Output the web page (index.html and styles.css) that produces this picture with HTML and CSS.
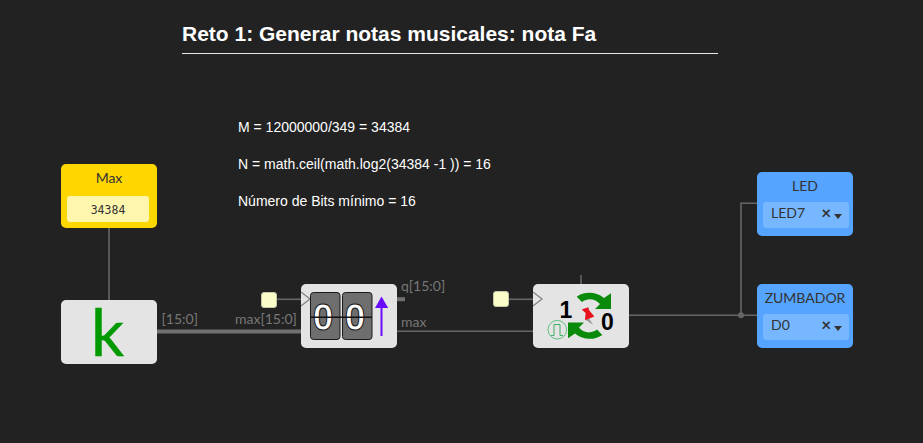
FILE: index.html
```html
<!DOCTYPE html>
<html lang="es">
<head>
    <meta charset="UTF-8">
    <title>Reto 1: nota Fa</title>
    <link rel="stylesheet" href="styles.css">
</head>
<body>
    <div class="canvas">
        <!-- wires go under the blocks -->
        <svg class="wires" width="923" height="443" viewBox="0 0 923 443">
            <g fill="none" stroke="#666" stroke-width="1.600">
                <path d="M109 228V300"/>
                <path d="M277 299.300H301"/>
                <path d="M397 331.300H533"/>
                <path d="M509 299.300H533"/>
                <path d="M581 275V284"/>
                <path d="M629 315.300H757"/>
                <path d="M741 315V203.300H757"/>
            </g>
            <g fill="none" stroke="#707070" stroke-width="4">
                <path d="M157 331.500H301"/>
                <path d="M397 299.200H405"/>
            </g>
            <circle cx="741" cy="315.300" r="3" fill="#666"/>
        </svg>

        <div class="sheet-note title">Reto 1: Generar notas musicales: nota Fa</div>
        <div class="sheet-note notes">
            <p>M = 12000000/349 = 34384</p>
            <p>N = math.ceil(math.log2(34384 -1 )) = 16</p>
            <p>Número de Bits mínimo = 16</p>
        </div>

        <div class="block block-const">
            <div class="block-name">Max</div>
            <div class="const-value">34384</div>
        </div>

        <div class="block block-gray block-k">k</div>

        <div class="block block-gray block-counter">
            <svg width="96" height="64" viewBox="0 0 96 64">
                <path class="clock-tick" d="M0 8L9 15L0 22"/>
                <g stroke="#1a1a1a" stroke-width="1" fill="#6e6e6e">
                    <rect x="9.500" y="8.500" width="29.500" height="47" rx="3"/>
                    <rect x="41.500" y="8.500" width="29.500" height="47" rx="3"/>
                </g>
                <text x="22" y="46" class="flip-digit">0</text>
                <text x="54" y="46" class="flip-digit">0</text>
                <path d="M9.500 33.300H71" stroke="#111" stroke-width="1.500"/>
                <path d="M80.500 23V52" stroke="#6a0dff" stroke-width="2"/>
                <path d="M74 24L80.500 12.500L87.200 24Z" fill="#6a0dff"/>
            </svg>
        </div>

        <div class="block block-gray block-pull">
            <svg width="96" height="64" viewBox="0 0 96 64">
                <path class="clock-tick" d="M0 8L9 15L0 22"/>
                <text x="26.500" y="34" class="pull-digit">1</text>
                <text x="68" y="46" class="pull-digit">0</text>
                <g fill="#0a8a0a">
                    <path d="M43.700 12.700C50 8 62 6.500 71 14L78 9.300V25H62L67 20C62 14 54 14 49 18Z"/>
                    <path d="M43.700 12.700C50 8 62 6.500 71 14L78 9.300V25H62L67 20C62 14 54 14 49 18Z" transform="rotate(180 56.500 31.800)"/>
                </g>
                <path d="M56 34L60 41L53 36Z" fill="#9a9a9a"/>
                <path d="M48.700 25.500L55.300 23.300L56 26L61.300 32.500L52 36.300L52.600 29Z" fill="#e8101c"/>
                <circle cx="24.300" cy="45.700" r="9.300" fill="none" stroke="#3cb96a" stroke-width="0.800"/>
                <path d="M18 51.500H21V40.500H27V51.500H30" fill="none" stroke="#2fa85a" stroke-width="0.900"/>
            </svg>
        </div>

        <div class="block block-pin block-led">
            <div class="block-name">LED</div>
            <div class="pin-select"><span>LED7</span><span class="pin-clear">×</span><span class="pin-caret"></span></div>
        </div>

        <div class="block block-pin block-buzzer">
            <div class="block-name">ZUMBADOR</div>
            <div class="pin-select"><span>D0</span><span class="pin-clear">×</span><span class="pin-caret"></span></div>
        </div>

        <div class="clock-input clock-a"></div>
        <div class="clock-input clock-b"></div>

        <span class="wire-label label-k">[15:0]</span>
        <span class="wire-label label-max-in">max[15:0]</span>
        <span class="wire-label label-q">q[15:0]</span>
        <span class="wire-label label-max">max</span>
    </div>
</body>
</html>
```

FILE: styles.css
```css
body {
    margin: 0;
    background-color: #222222;
    font-family: 'Lato', 'Liberation Sans', sans-serif;
    overflow: hidden;
}

.canvas {
    position: relative;
    width: 923px;
    height: 443px;
    overflow: hidden;
}

.wires {
    position: absolute;
    left: 0;
    top: 0;
}

.sheet-note {
    position: absolute;
    color: #ffffff;
    font-family: 'Liberation Sans', Arial, sans-serif;
}

.title {
    left: 182px;
    top: 21px;
    width: 536px;
    height: 32px;
    border-bottom: 1px solid #e8e8e8;
    font-size: 21px;
    font-weight: bold;
    line-height: 26px;
}

.notes {
    left: 238px;
    top: 109px;
    font-size: 14px;
    line-height: 37px;
}

.notes p {
    margin: 0;
}

.block {
    position: absolute;
    width: 96px;
    height: 64px;
    border-radius: 5px;
    box-sizing: border-box;
    color: #333333;
}

.block svg {
    display: block;
}

.block-gray {
    background-color: #e4e4e4;
}

.block-name {
    font-size: 14px;
    line-height: 17px;
    text-align: center;
    padding-top: 5px;
}

.block-const {
    left: 61px;
    top: 164px;
    background-color: #ffd700;
}

.const-value {
    margin: 10px 8px 0 6px;
    height: 26px;
    border-radius: 3px;
    background-color: #fff6ae;
    font-family: 'DejaVu Sans Mono', monospace;
    font-size: 11.5px;
    line-height: 28px;
    text-align: center;
}

.block-k {
    left: 61px;
    top: 300px;
    padding-right: 3px;
    color: #009900;
    font-size: 65px;
    line-height: 62px;
    text-align: center;
    -webkit-text-stroke: 0.5px #009900;
}

.block-counter {
    left: 301px;
    top: 284px;
}

.block-pull {
    left: 533px;
    top: 284px;
}

.clock-tick {
    fill: none;
    stroke: #808080;
    stroke-width: 1.2;
}

.flip-digit {
    font-family: 'Liberation Sans', sans-serif;
    font-size: 37px;
    font-weight: bold;
    text-anchor: middle;
    fill: #ffffff;
    stroke: #111111;
    stroke-width: 1;
}

.pull-digit {
    font-family: 'Liberation Sans', sans-serif;
    font-size: 23px;
    font-weight: bold;
    fill: #000000;
}

.block-pin {
    background-color: #55a4ff;
}

.block-led {
    left: 757px;
    top: 172px;
}

.block-buzzer {
    left: 757px;
    top: 284px;
}

.pin-select {
    display: flex;
    align-items: center;
    margin: 8px 4px 0 6px;
    height: 26px;
    padding: 0 7px 0 8px;
    border-radius: 3px;
    background-color: #77b7ff;
    font-size: 14px;
    box-sizing: border-box;
}

.pin-select span:first-child {
    flex: 1;
    margin-top: -5px;
}

.pin-clear {
    font-size: 17px;
    font-weight: bold;
    margin-top: -6px;
    margin-right: 3px;
}

.pin-caret {
    width: 0;
    height: 0;
    border-left: 4px solid transparent;
    border-right: 4px solid transparent;
    border-top: 5px solid #333333;
    margin-top: 3px;
}

.clock-input {
    position: absolute;
    width: 16px;
    height: 16px;
    border-radius: 3px;
    border: 1px solid #c8c8a8;
    box-sizing: border-box;
    background-color: #f9fdc9;
}

.clock-a {
    left: 261px;
    top: 291.500px;
}

.clock-b {
    left: 493px;
    top: 291px;
}

.wire-label {
    position: absolute;
    color: #777777;
    font-size: 14px;
    line-height: 17px;
}

.label-k {
    left: 161.500px;
    top: 310px;
}

.label-max-in {
    left: 235px;
    top: 310px;
}

.label-q {
    left: 401px;
    top: 277px;
}

.label-max {
    left: 401px;
    top: 313px;
}
```
